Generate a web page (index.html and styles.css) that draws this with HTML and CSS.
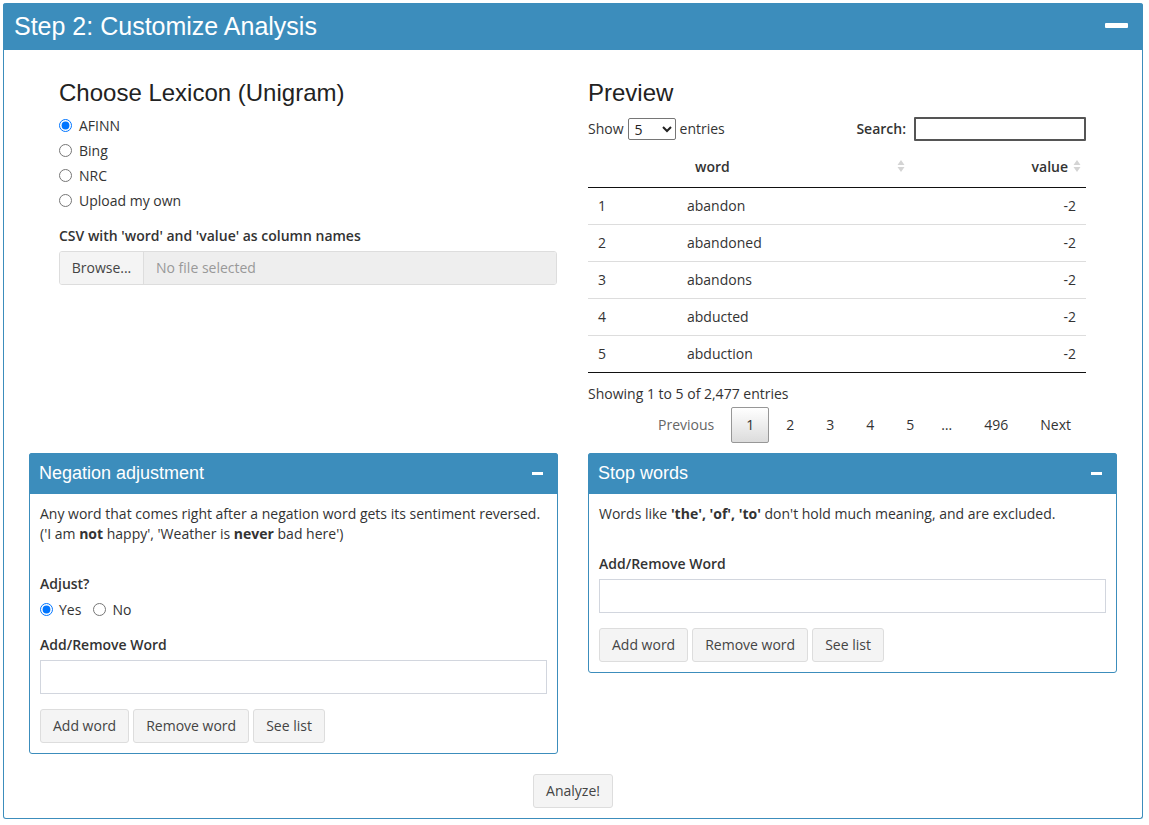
FILE: index.html
```html
<!DOCTYPE html>
<html>
<head>
<meta charset="utf-8">
<link rel="stylesheet" href="styles.css">
</head>
<body>
<div class="main-box">
  <div class="main-header">
    <h2 class="main-title">Step 2: Customize Analysis</h2>
    <span class="minus-big"></span>
  </div>
  <div class="main-body">
    <div class="grid top-row">
      <div class="col-left">
        <h3 class="h3">Choose Lexicon (Unigram)</h3>
        <div class="radio-list">
          <label class="radio"><input type="radio" name="lex" checked><span>AFINN</span></label>
          <label class="radio"><input type="radio" name="lex"><span>Bing</span></label>
          <label class="radio"><input type="radio" name="lex"><span>NRC</span></label>
          <label class="radio"><input type="radio" name="lex"><span>Upload my own</span></label>
        </div>
        <div class="csv-group">
          <div class="ctl-label">CSV with 'word' and 'value' as column names</div>
          <div class="file-input">
            <span class="browse">Browse...</span>
            <span class="file-name">No file selected</span>
          </div>
        </div>
      </div>
      <div class="col-right">
        <h3 class="h3">Preview</h3>
        <div class="dt-controls">
          <div class="dt-length">Show
            <select class="dt-select"><option>5</option><option>10</option></select>
            entries</div>
          <div class="dt-search">Search: <input class="search-input" type="text"></div>
        </div>
        <table class="dt">
          <thead>
            <tr>
              <th class="c-idx"></th>
              <th class="c-word"><span>word</span><svg class="sort" viewBox="0 0 8 14" width="8" height="14"><path d="M4 1 L7.5 6 H0.5 Z M4 13 L7.5 8 H0.5 Z" fill="#d4d4d4"/></svg></th>
              <th class="c-val"><span>value</span><svg class="sort" viewBox="0 0 8 14" width="8" height="14"><path d="M4 1 L7.5 6 H0.5 Z M4 13 L7.5 8 H0.5 Z" fill="#d4d4d4"/></svg></th>
            </tr>
          </thead>
          <tbody>
            <tr><td class="c-idx">1</td><td class="c-word">abandon</td><td class="c-val">-2</td></tr>
            <tr><td class="c-idx">2</td><td class="c-word">abandoned</td><td class="c-val">-2</td></tr>
            <tr><td class="c-idx">3</td><td class="c-word">abandons</td><td class="c-val">-2</td></tr>
            <tr><td class="c-idx">4</td><td class="c-word">abducted</td><td class="c-val">-2</td></tr>
            <tr><td class="c-idx">5</td><td class="c-word">abduction</td><td class="c-val">-2</td></tr>
          </tbody>
        </table>
        <div class="dt-info">Showing 1 to 5 of 2,477 entries</div>
        <div class="dt-pages">
          <span class="pg">Previous</span>
          <span class="pg current">1</span>
          <span class="pg">2</span>
          <span class="pg">3</span>
          <span class="pg">4</span>
          <span class="pg">5</span>
          <span class="pg ellipsis">…</span>
          <span class="pg">496</span>
          <span class="pg">Next</span>
        </div>
      </div>
    </div>

    <div class="grid bottom-row">
      <div class="box">
        <div class="box-header">
          <h3 class="box-title">Negation adjustment</h3>
          <span class="minus-small"></span>
        </div>
        <div class="box-body">
          <p class="desc">Any word that comes right after a negation word gets its sentiment reversed.<br>('I am <b>not</b> happy', 'Weather is <b>never</b> bad here')</p>
          <div class="form-group">
            <div class="ctl-label">Adjust?</div>
            <div class="inline-radios">
              <label class="radio-inline"><input type="radio" name="adj" checked><span>Yes</span></label>
              <label class="radio-inline"><input type="radio" name="adj"><span>No</span></label>
            </div>
          </div>
          <div class="form-group">
            <div class="ctl-label lbl-gap">Add/Remove Word</div>
            <input class="text-input" type="text">
          </div>
          <div class="btn-row">
            <button class="btn">Add word</button>
            <button class="btn">Remove word</button>
            <button class="btn">See list</button>
          </div>
        </div>
      </div>

      <div class="box box-stop">
        <div class="box-header">
          <h3 class="box-title">Stop words</h3>
          <span class="minus-small"></span>
        </div>
        <div class="box-body">
          <p class="desc">Words like <b>'the', 'of', 'to'</b> don't hold much meaning, and are excluded.</p>
          <div class="form-group">
            <div class="ctl-label lbl-gap">Add/Remove Word</div>
            <input class="text-input" type="text">
          </div>
          <div class="btn-row">
            <button class="btn">Add word</button>
            <button class="btn">Remove word</button>
            <button class="btn">See list</button>
          </div>
        </div>
      </div>
    </div>

    <div class="analyze-row">
      <button class="btn">Analyze!</button>
    </div>
  </div>
</div>
</body>
</html>
```

FILE: styles.css
```css
* { box-sizing: border-box; }

html, body {
  margin: 0;
  padding: 0;
  background: #ffffff;
}

body {
  padding: 3px 6px 0 3px;
  font-family: "Open Sans", "Noto Sans", sans-serif;
  font-size: 14px;
  line-height: 20px;
  color: #333333;
}

.main-box {
  width: 1140px;
  border: 1px solid #3c8dbc;
  border-top: none;
  border-radius: 3px;
}

.main-header {
  height: 47px;
  background: #3c8dbc;
  display: flex;
  align-items: center;
  justify-content: space-between;
  padding: 0 15px 0 10px;
  border-radius: 3px 3px 0 0;
  margin: 0 -1px;
}

.main-title {
  margin: 0;
  font-family: "Liberation Sans", Arial, sans-serif;
  font-weight: normal;
  font-size: 25px;
  color: #ffffff;
  padding-left: 1px;
  padding-bottom: 1px;
}

.minus-big {
  display: block;
  width: 23px;
  height: 5px;
  background: #ffffff;
  border-radius: 1px;
  margin-top: -3px;
}

.main-body {
  padding: 0 0 10px 0;
}

.grid {
  display: grid;
  grid-template-columns: 529px 529px;
  column-gap: 30px;
  padding: 0 24px 0 25px;
}

.top-row {
  padding-top: 30px;
}

.col-left {
  padding-left: 30px;
  padding-right: 1px;
}

.col-right {
  padding-right: 31px;
}

.h3 {
  margin: 0;
  font-family: "Liberation Sans", Arial, sans-serif;
  font-weight: normal;
  font-size: 24px;
  line-height: 26.4px;
  color: #222;
}

.radio-list {
  margin-top: 7px;
  display: flex;
  flex-direction: column;
}

.radio {
  height: 25px;
  display: flex;
  align-items: center;
  gap: 7px;
  color: #333;
}

.radio input, .radio-inline input {
  margin: 0;
  width: 13px;
  height: 13px;
}

.csv-group {
  margin-top: 13px;
}

.ctl-label {
  font-weight: 600;
  color: #333;
}

.file-input {
  margin-top: 5px;
  display: flex;
  height: 34px;
  border: 1px solid #dddddd;
  border-radius: 3px;
  overflow: hidden;
}

.browse {
  width: 84px;
  background: #f4f4f4;
  color: #444;
  display: flex;
  align-items: center;
  justify-content: center;
  border-right: 1px solid #dddddd;
}

.file-name {
  flex: 1;
  background: #eeeeee;
  color: #999;
  display: flex;
  align-items: center;
  padding-left: 12px;
}

.dt-controls {
  margin-top: 10px;
  display: flex;
  justify-content: space-between;
  align-items: center;
  height: 26px;
}

.dt-length {
  display: flex;
  align-items: center;
  gap: 4px;
}

.dt-select {
  width: 48px;
  height: 22px;
  font-family: "Open Sans", sans-serif;
  font-size: 14px;
  border: 1px solid #767676;
  border-radius: 2px;
  padding: 0 2px;
  background: #fff;
  color: #222;
}

.dt-search {
  display: flex;
  align-items: center;
  gap: 8px;
  font-weight: 600;
}

.search-input {
  width: 172px;
  height: 24px;
  border: 2px solid #555;
  border-radius: 1px;
  margin: 0;
}

.dt {
  margin-top: 8px;
  width: 100%;
  border-collapse: collapse;
  border-bottom: 1px solid #111;
}

.dt th {
  height: 37px;
  font-weight: 600;
  border-bottom: 1px solid #111;
  padding: 0 0 4px 0;
  position: relative;
}

.dt td {
  height: 37px;
  padding: 0 10px;
  border-top: 1px solid #dddddd;
}

.dt tbody tr:first-child td {
  border-top: none;
}

.dt .c-idx { width: 89px; color: #333; }
.dt .c-word { width: 236px; }
.dt .c-val { text-align: right; }

.dt th.c-word {
  text-align: left;
  padding-left: 18px;
}

.dt th.c-val {
  text-align: right;
  padding-right: 18px;
}

.sort {
  position: absolute;
  top: 9px;
}

.dt th.c-word .sort { right: 8px; }
.dt th.c-val .sort { right: 5px; }

.dt-info {
  margin-top: 11px;
}

.dt-pages {
  margin-top: 3px;
  display: flex;
  justify-content: flex-end;
}

.pg {
  padding: 7px 14px;
  margin-left: 2px;
  border: 1px solid transparent;
  border-radius: 2px;
  color: #333;
  line-height: 20px;
}

.pg:first-child {
  color: #666;
}

.pg.current {
  border-color: #979797;
  background: linear-gradient(to bottom, #ffffff 0%, #dcdcdc 100%);
}

.pg.ellipsis {
  padding: 7px 14px 7px 9px;
  color: #333;
}

.bottom-row {
  margin-top: 10px;
  align-items: start;
}

.box {
  border: 1px solid #3c8dbc;
  border-radius: 3px;
  background: #fff;
}

.box-header {
  background: #3c8dbc;
  display: flex;
  align-items: center;
  justify-content: space-between;
  padding: 0 15px 0 10px;
  margin: -1px -1px 0 -1px;
  border-radius: 3px 3px 0 0;
  height: 41px;
}

.box-title {
  margin: 0;
  font-family: "Liberation Sans", Arial, sans-serif;
  font-weight: normal;
  font-size: 18px;
  color: #fff;
}

.minus-small {
  display: block;
  width: 11px;
  height: 3px;
  background: #fff;
}

.box-body {
  padding: 10px;
}

.desc {
  margin: 0 0 30px 0;
}

.form-group {
  margin-bottom: 15px;
}

.inline-radios {
  display: flex;
  gap: 12px;
  margin-top: 6px;
}

.radio-inline {
  display: flex;
  align-items: center;
  gap: 6px;
}

.lbl-gap {
  margin-bottom: 5px;
}

.text-input {
  display: block;
  width: 100%;
  height: 34px;
  border: 1px solid #d2d6de;
  margin: 0;
  padding: 6px 12px;
}

.btn-row {
  display: flex;
  gap: 4px;
}

.btn {
  height: 34px;
  padding: 6px 12px;
  background: #f4f4f4;
  border: 1px solid #dddddd;
  border-radius: 3px;
  color: #444;
  font-family: "Open Sans", sans-serif;
  font-size: 14px;
  line-height: 20px;
  margin: 0;
}

.analyze-row {
  display: flex;
  justify-content: center;
  margin-top: 20px;
}
```
